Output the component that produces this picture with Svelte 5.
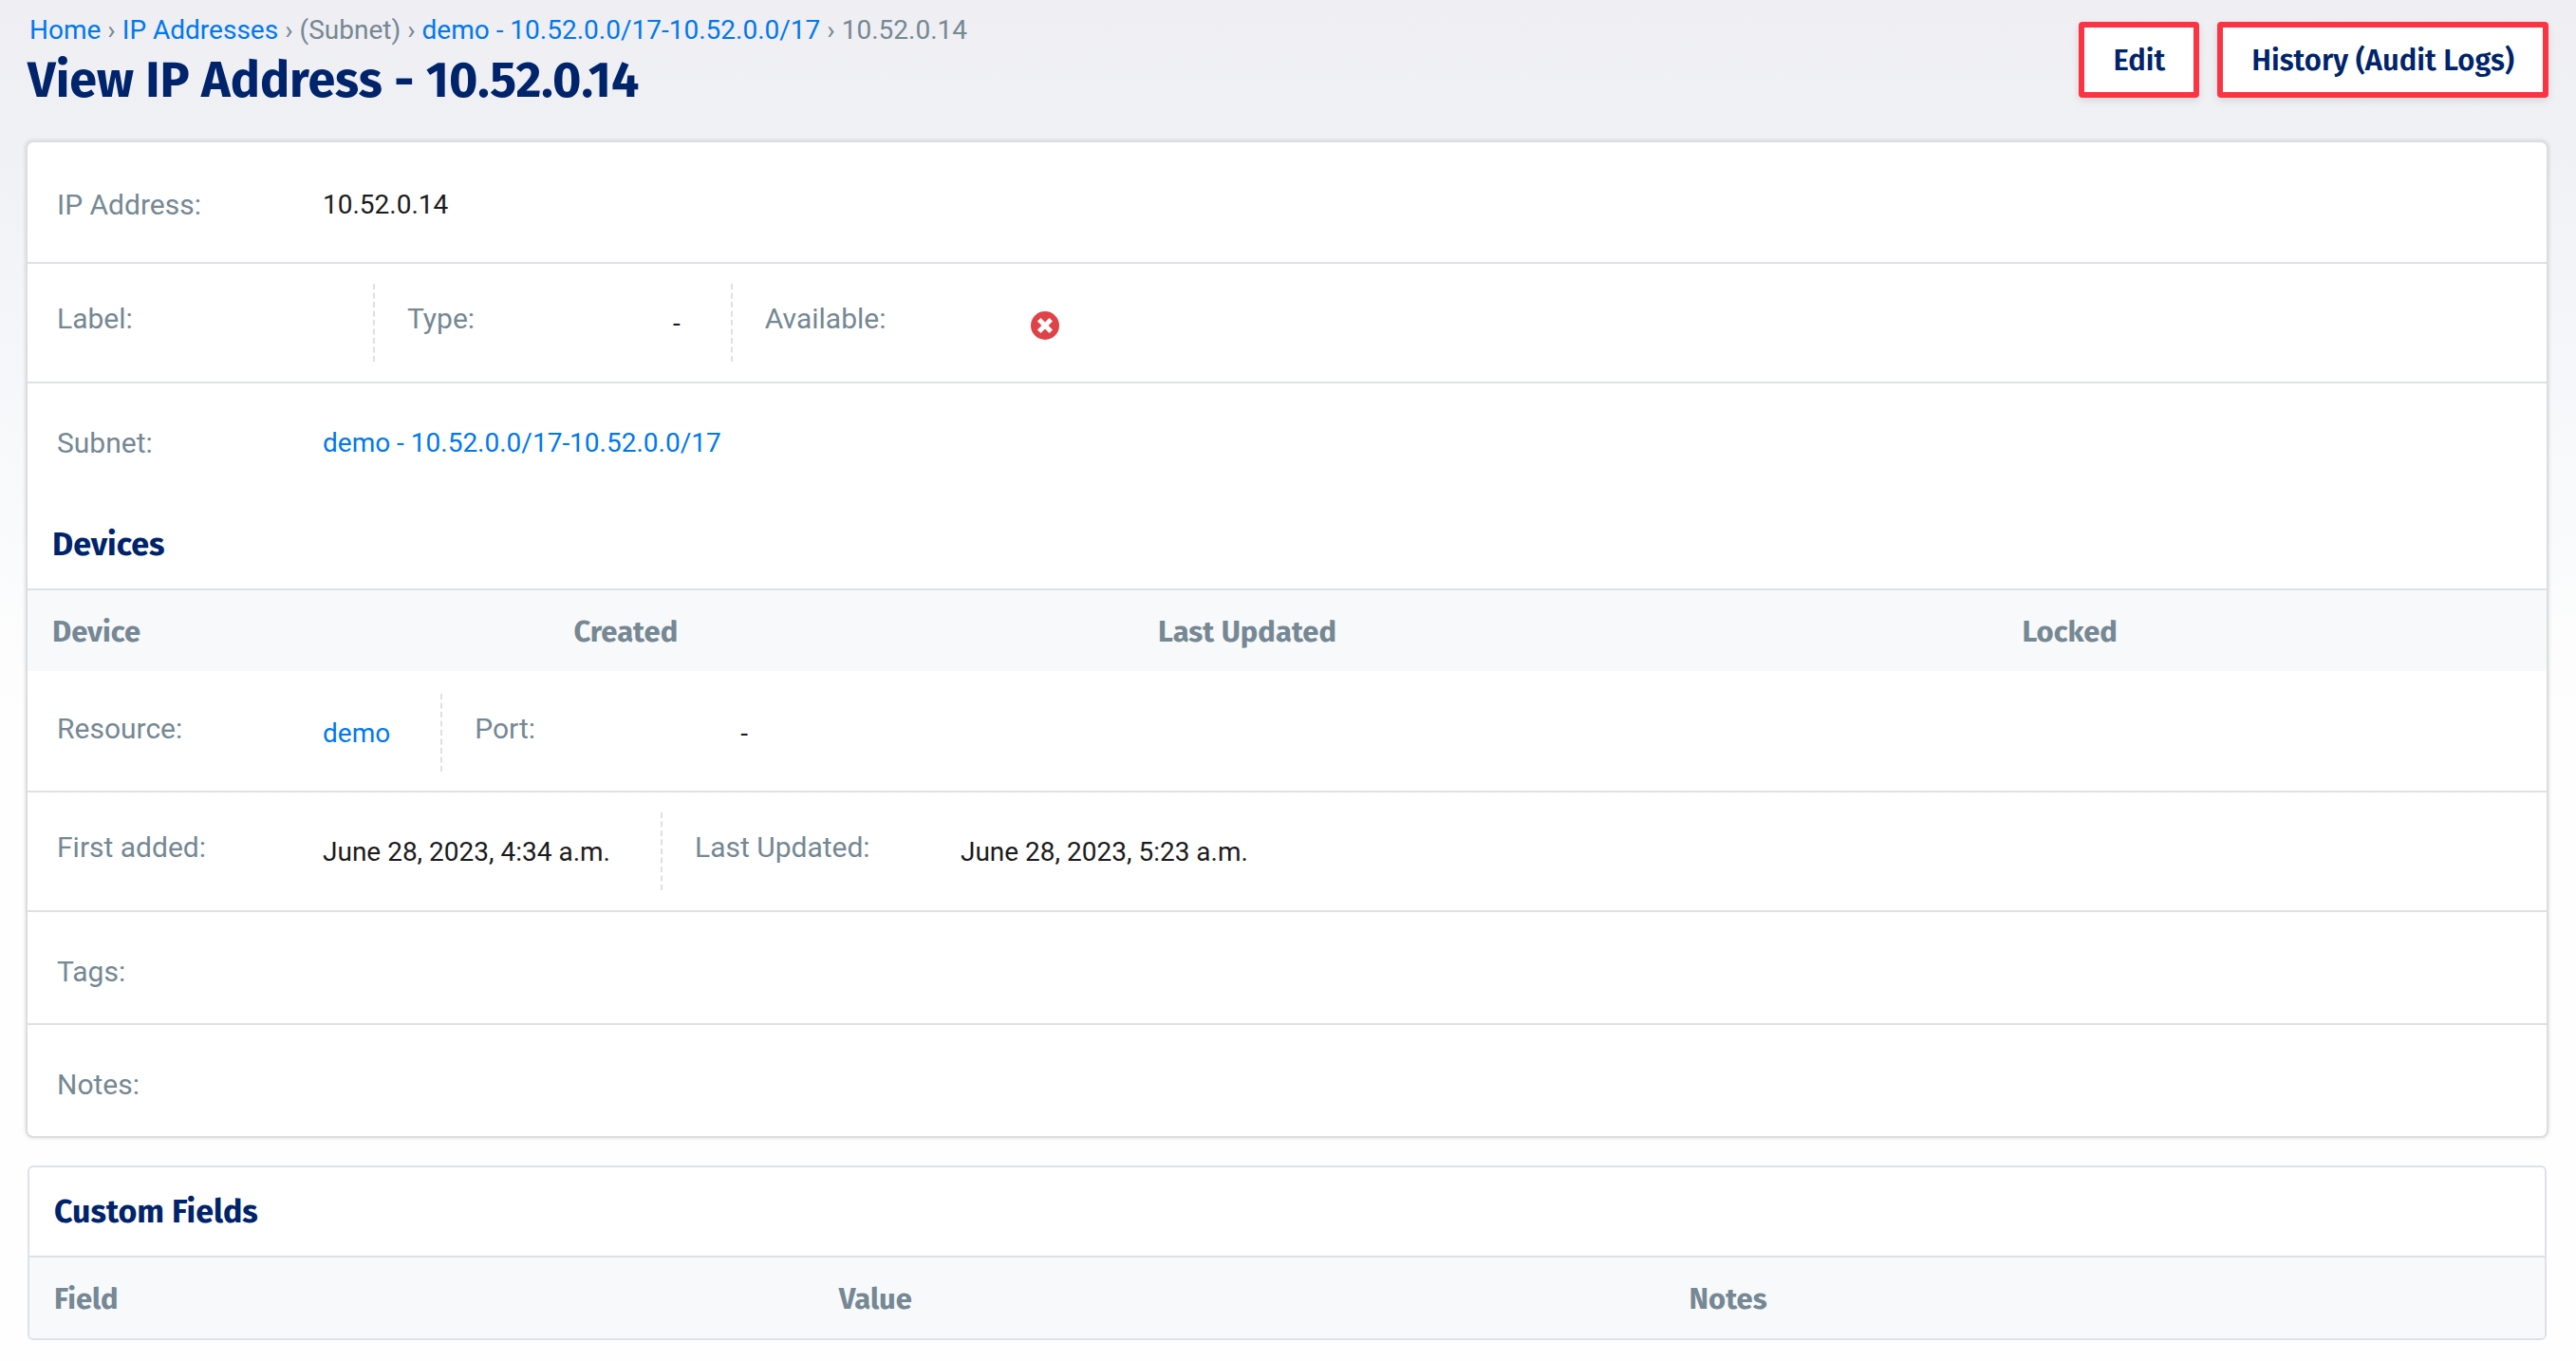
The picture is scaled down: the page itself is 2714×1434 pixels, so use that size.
<script>
  const subnet = 'demo - 10.52.0.0/17-10.52.0.0/17';

  const crumbs = [
    { text: 'Home', link: true },
    { text: 'IP Addresses', link: true },
    { text: '(Subnet)' },
    { text: subnet, link: true },
    { text: '10.52.0.14' }
  ];

  const upperRows = [
    { tall: true, fields: [{ label: 'IP Address:', value: '10.52.0.14' }] },
    {
      fields: [
        { label: 'Label:', value: '' },
        { label: 'Type:', value: '-' },
        { label: 'Available:', icon: true }
      ]
    },
    { fields: [{ label: 'Subnet:', value: subnet, link: true }] }
  ];

  const lowerRows = [
    {
      tall: true,
      fields: [
        { label: 'Resource:', value: 'demo', link: true },
        { label: 'Port:', value: '-' }
      ]
    },
    {
      fields: [
        { label: 'First added:', value: 'June 28, 2023, 4:34 a.m.' },
        { label: 'Last Updated:', value: 'June 28, 2023, 5:23 a.m.' }
      ]
    },
    { short: true, fields: [{ label: 'Tags:', value: '' }] },
    { short: true, fields: [{ label: 'Notes:', value: '' }] }
  ];
</script>

{#snippet fieldRow(row)}
  <dl class="row" class:tall={row.tall} class:short={row.short} class:single={row.fields.length === 1}>
    {#each row.fields as field}
      <div class="field">
        <dt>{field.label}</dt>
        <dd>
          {#if field.icon}
            <svg class="no" viewBox="0 0 30 30" role="img" aria-label="No">
              <circle cx="15" cy="15" r="15" fill="#de4348" />
              <path d="M10.5 10.5l9 9M19.5 10.5l-9 9" stroke="#fff" stroke-width="5" stroke-linecap="square" />
            </svg>
          {:else if field.link}
            <a href="#top">{field.value}</a>
          {:else}
            {field.value}
          {/if}
        </dd>
      </div>
    {/each}
  </dl>
{/snippet}

<div class="page" id="top">
  <header>
    <div>
      <nav aria-label="Breadcrumb">
        {#each crumbs as crumb, i}
          {#if i > 0}<span>›</span>{/if}
          {#if crumb.link}<a href="#top">{crumb.text}</a>{:else}<span>{crumb.text}</span>{/if}
        {/each}
      </nav>
      <h1>View IP Address - 10.52.0.14</h1>
    </div>
    <div class="actions">
      <button type="button">Edit</button>
      <button type="button">History (Audit Logs)</button>
    </div>
  </header>

  <main>
    <section class="card details">
      {#each upperRows as row}{@render fieldRow(row)}{/each}
      <h2>Devices</h2>
      <table class="devices">
        <thead>
          <tr><th scope="col">Device</th><th scope="col">Created</th><th scope="col">Last Updated</th><th scope="col">Locked</th></tr>
        </thead>
      </table>
      {#each lowerRows as row}{@render fieldRow(row)}{/each}
    </section>

    <section class="card custom">
      <h2>Custom Fields</h2>
      <table class="fields">
        <thead>
          <tr><th scope="col">Field</th><th scope="col">Value</th><th scope="col">Notes</th></tr>
        </thead>
      </table>
    </section>
  </main>
</div>

<style>
  :global(body) {
    background: linear-gradient(#eeeef3 0, #f0f1f5 150px, #f8f9fb 480px, #fefefe 760px) #fefefe no-repeat;
  }

  .page {
    box-sizing: border-box;
    min-height: 100vh;
    padding: 14px 31px 22px 29px;
    color: #1b1b1b;
    font: 28px/42px Roboto, "Open Sans", sans-serif;
  }

  a {
    color: #0078ee;
    text-decoration: none;
  }

  header {
    display: flex;
    justify-content: space-between;
    align-items: flex-start;
    margin-bottom: 35px;
  }

  nav {
    display: flex;
    gap: 7px;
    padding-left: 2px;
    line-height: 36px;
    color: #758893;
  }

  h1,
  h2,
  th,
  button {
    font-family: "Fira Sans", Lato, sans-serif;
    font-weight: 700;
  }

  h1 {
    margin: 5px 0 0;
    font-size: 52px;
    line-height: 60px;
    color: #00246b;
  }

  .actions {
    display: flex;
    gap: 19px;
    padding-top: 9px;
    margin-right: -2px;
  }

  button {
    padding: 20px 30px 18px;
    border: 6px solid #fb3443;
    border-radius: 4px;
    background: #fff;
    box-shadow: 0 3px 8px rgba(0, 0, 0, 0.1);
    color: #00246b;
    font-size: 31px;
    line-height: 30px;
    font-weight: 600;
  }

  .card {
    border-radius: 6px;
    background: #fff;
  }

  .details {
    box-shadow: 0 0 0 2px #dcdddf, 0 0 4px 2px rgba(0, 0, 0, 0.14);
  }

  .custom {
    margin-top: 31px;
    border: 2px solid #dee1e6;
    overflow: hidden;
  }

  .row {
    display: flex;
    margin: 0;
    padding: 21px 0;
    border-bottom: 2px solid #dee1e6;
  }

  .row.tall {
    padding: 24px 0 20px;
  }

  .row:last-child {
    border-bottom: 0;
  }

  .row:has(+ h2) {
    padding-bottom: 20px;
    border-bottom: 0;
  }

  .field {
    display: flex;
    min-height: 82px;
    box-sizing: border-box;
    padding: 0 53px 0 34px;
    border-right: 2px dashed #dfe0e7;
  }

  .field:first-child {
    padding-left: 31px;
  }

  .field:last-child {
    border-right: 0;
  }

  .short .field {
    min-height: 75px;
  }

  dt {
    width: 280px;
    padding-top: 16px;
    font-size: 30px;
    color: #758893;
  }

  .single dt {
    padding-top: 21px;
  }

  dd {
    margin: 0;
    padding-top: 21px;
  }

  .no {
    display: block;
    width: 30px;
    height: 30px;
    margin-top: 8px;
  }

  h2 {
    margin: 0;
    padding: 24px 27px 23px;
    border-bottom: 2px solid #dee1e6;
    font-size: 34px;
    line-height: 46px;
    color: #00246b;
  }

  table {
    width: 100%;
    table-layout: fixed;
    border-collapse: collapse;
    background: #f8f9fb;
  }

  th {
    box-sizing: border-box;
    padding: 23px 0 20px 26px;
    text-align: left;
    font-size: 31px;
    line-height: 42px;
    color: #758893;
  }

  h2 {
    padding-left: 26px;
  }

  .devices th:nth-child(1) { width: 20.7%; }
  .devices th:nth-child(2) { width: 23.2%; }
  .devices th:nth-child(3) { width: 34.3%; }
  .fields th:nth-child(1) { width: 31.2%; }
  .fields th:nth-child(2) { width: 33.8%; }
</style>
